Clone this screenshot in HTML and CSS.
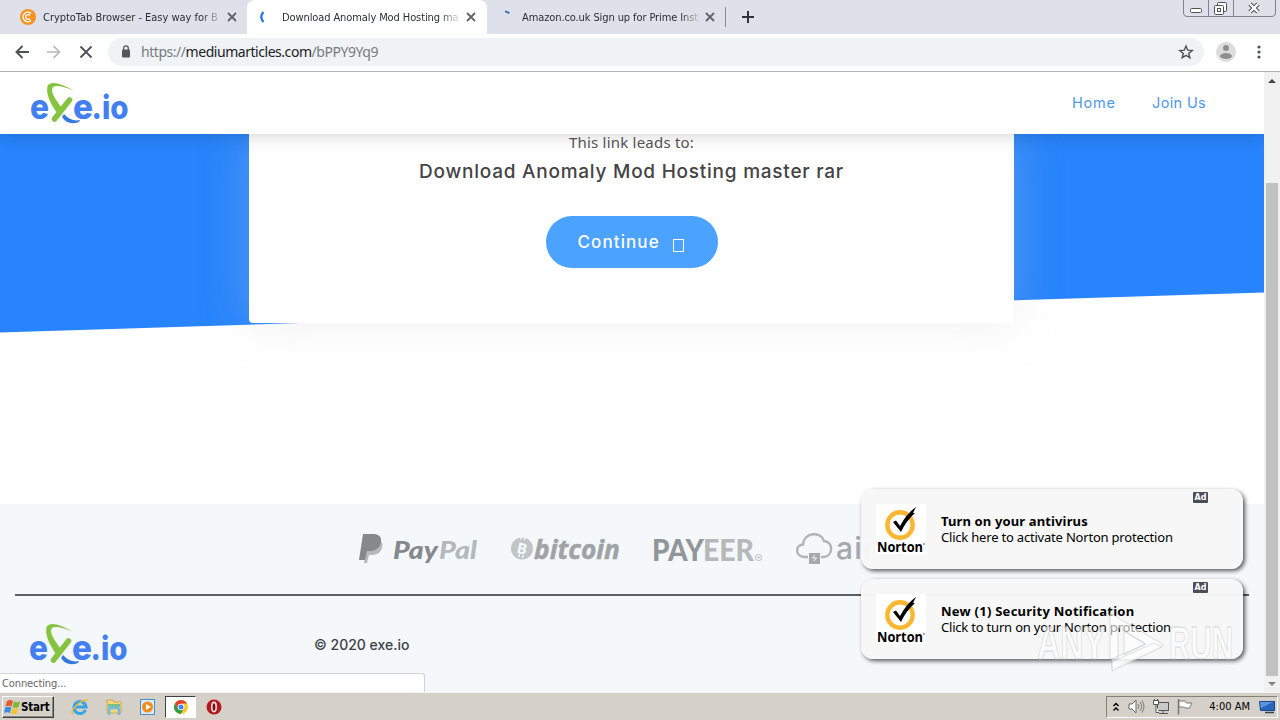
FILE: index.html
```
<!DOCTYPE html>
<html lang="en">
  <head>
    <meta charset="utf-8">
    <title>Download Anomaly Mod Hosting master rar</title>
    <link rel="stylesheet" href="styles.css">
  </head>
  <body>
    <!-- shared shapes -->
    <svg class="defs" width="0" height="0">
      <symbol id="exe-logo" viewBox="0 0 98 42">
        <g fill="#437ff0" font-family="Inter" font-weight="800" font-size="35">
          <text x="0" y="36.500" textLength="19" lengthAdjust="spacingAndGlyphs">e</text>
          <text x="43" y="36.500" textLength="20" lengthAdjust="spacingAndGlyphs">e</text>
          <text x="61.500" y="36.500" font-size="33" textLength="37" lengthAdjust="spacingAndGlyphs">.io</text>
        </g>
        <path d="M34 32 Q41 40 50 38 L49 40 Q38 44 32 35z" fill="#3478e0"/>
        <path d="M44 9 Q24 -3 18 3 C15 10 20 21 27 31 L32 26 C25 17 20 9 23 5 Q28 2 44 9z" fill="#86c440"/>
        <path d="M39.500 18 L24.500 37" stroke="#86c440" stroke-width="5.500" stroke-linecap="round"/>
      </symbol>
      <symbol id="norton" viewBox="0 0 50 50">
        <rect width="50" height="50" fill="#fff"/>
        <circle cx="24" cy="21" r="12.700" fill="none" stroke="#fdb62f" stroke-width="4.400"/>
        <path d="M17 18 L20 16.500 L24 22 Q31 9 40 3 L37 9 L39 9 Q30 17 25 28z" fill="#000"/>
        <text x="1" y="48" font-family="Open Sans" font-weight="700" font-size="15" textLength="46" lengthAdjust="spacingAndGlyphs">Norton</text>
        <path d="M47 40h2" stroke="#555"/>
      </symbol>
    </svg>

    <div class="tabs">
      <div class="tab first">
        <svg width="16" height="16" viewBox="0 0 16 16"><circle cx="8" cy="8" r="8" fill="#f7931e"/><path d="M11 4.500A4.700 4.700 0 1 0 11 11.500" fill="none" stroke="#fff" stroke-width="1.500"/><path d="M10 6.500A2.400 2.400 0 1 0 10 9.500" fill="none" stroke="#fff" stroke-width="1.300"/></svg>
        <span class="tab-title">CryptoTab Browser - Easy way for B</span>
        <svg class="close" width="10" height="10" viewBox="0 0 10 10"><path d="M1 1l8 8M9 1l-8 8"/></svg>
      </div>
      <div class="tab active">
        <svg width="16" height="16" viewBox="0 0 16 16"><path d="M5.500 3Q1 8 5.500 13" fill="none" stroke="#2b78e4" stroke-width="2.300"/></svg>
        <span class="tab-title">Download Anomaly Mod Hosting mas</span>
        <svg class="close" width="10" height="10" viewBox="0 0 10 10"><path d="M1 1l8 8M9 1l-8 8"/></svg>
      </div>
      <div class="tab last">
        <svg width="16" height="16" viewBox="0 0 16 16"><path d="M7 2.500q3 0 4 2" fill="none" stroke="#3c6eb8" stroke-width="2"/></svg>
        <span class="tab-title">Amazon.co.uk Sign up for Prime Inst</span>
        <svg class="close" width="10" height="10" viewBox="0 0 10 10"><path d="M1 1l8 8M9 1l-8 8"/></svg>
      </div>
      <svg class="new-tab" width="12" height="12" viewBox="0 0 12 12"><path d="M6 0v12M0 6h12" stroke="#30343a" stroke-width="2"/></svg>
      <svg class="window-buttons" width="94" height="18" viewBox="0 0 94 18">
        <path d="M.5 0V13Q.5 16.500 4 16.500H89Q92.500 16.500 92.500 13V0M25.500 0V16M50.500 0V16" fill="none" stroke="#7e838e"/>
        <g fill="#fff" stroke="#4b505b"><rect x="7.500" y="8.500" width="11" height="4" rx="1"/><rect x="34.500" y="2.500" width="9" height="9" rx="1"/><rect x="31.500" y="5.500" width="9" height="9" rx="1"/><rect x="34.500" y="8.500" width="3" height="3"/></g>
        <path d="M67 4l8 8M75 4l-8 8" stroke="#4b505b" stroke-width="4.400"/><path d="M67 4l8 8M75 4l-8 8" stroke="#fff" stroke-width="2.400"/>
      </svg>
    </div>

    <div class="toolbar">
      <svg width="14" height="14" viewBox="0 0 14 14"><path d="M14 7H1.500M7.500 1L1.500 7l6 6" fill="none" stroke="#4d5156" stroke-width="1.900"/></svg>
      <svg width="14" height="14" viewBox="0 0 14 14"><path d="M0 7h12.500M6.500 1l6 6-6 6" fill="none" stroke="#b5b7ba" stroke-width="1.700"/></svg>
      <svg width="14" height="14" viewBox="0 0 14 14"><path d="M1.500 1.500l11 11M12.500 1.500l-11 11" stroke="#4d5156" stroke-width="1.800"/></svg>
      <div class="address">
        <svg width="10" height="13" viewBox="0 0 10 13"><rect x="1" y="4.500" width="8" height="8" rx="1" fill="#54585d"/><path d="M2.700 5V3.200a2.300 2.300 0 0 1 4.600 0V5" fill="none" stroke="#54585d" stroke-width="1.300"/></svg>
        <span class="url">https://<b>mediumarticles.com</b>/bPPY9Yq9</span>
        <svg class="star" width="16" height="16" viewBox="0 0 16 16"><path d="M8 2l1.700 4.200 4.500.3-3.500 2.900 1.200 4.400L8 11.400l-3.900 2.400 1.200-4.400-3.500-2.900 4.500-.3z" fill="none" stroke="#4d5156" stroke-width="1.400"/></svg>
      </div>
      <svg class="avatar" width="20" height="20" viewBox="0 0 20 20"><circle cx="10" cy="10" r="10" fill="#dcdcdc"/><circle cx="10" cy="6" r="3" fill="#8f8f8f"/><ellipse cx="10" cy="14" rx="6" ry="3" fill="#8f8f8f"/></svg>
      <svg class="dots" width="4" height="14" viewBox="0 0 4 14"><g fill="#4d5156"><circle cx="2" cy="2" r="1.600"/><circle cx="2" cy="7" r="1.600"/><circle cx="2" cy="12" r="1.600"/></g></svg>
    </div>

    <div class="viewport">
      <div class="page">
        <header class="site-header">
          <svg class="logo" width="98" height="42"><use href="#exe-logo"/></svg>
          <nav>
            <a class="home">Home</a>
            <a class="join">Join Us</a>
          </nav>
        </header>

        <section class="hero">
          <div class="card">
            <p class="lead">This link leads to:</p>
            <h1>Download Anomaly Mod Hosting master rar</h1>
            <a class="continue"><span>Continue</span><i></i></a>
          </div>
        </section>

        <footer>
          <div class="payments">
            <svg width="118" height="40" viewBox="0 0 118 40">
              <path d="M8 10h10q7 2 5 9t-10 7h-3l-2 8H5z" fill="#b5b9bc"/>
              <path d="M4 5h12q7 1 6 8t-9 9H8L6 31H0z" fill="#85898c"/>
              <g font-family="Lato" font-weight="900" font-style="italic" font-size="25">
                <text x="34" y="30" fill="#85898c" textLength="45" lengthAdjust="spacingAndGlyphs">Pay</text>
                <text x="80" y="30" fill="#b5b9bc" textLength="38" lengthAdjust="spacingAndGlyphs">Pal</text>
              </g>
            </svg>
            <svg width="108" height="40" viewBox="0 0 108 40">
              <circle cx="11" cy="19.500" r="11" fill="#c2c5c8"/>
              <text x="6" y="25" fill="#f4f8fb" font-family="Open Sans" font-weight="700" font-size="15" transform="rotate(12 11 20)">B</text>
              <path d="M10.500 7.500l-.5 3M14 8l-.5 3M8 28l.5-3M11.500 29l.5-3" stroke="#f4f8fb" stroke-width="1.500"/>
              <text x="23" y="30" fill="#9fa3a6" stroke="#9fa3a6" stroke-width=".5" font-family="Open Sans" font-weight="700" font-style="italic" font-size="27" textLength="86" lengthAdjust="spacingAndGlyphs">bitcoin</text>
            </svg>
            <svg width="109" height="40" viewBox="0 0 109 40">
              <g font-family="Lato" font-weight="900" font-size="30">
                <text x="-1" y="32" fill="#929699" textLength="52" lengthAdjust="spacingAndGlyphs">PAY</text>
                <text x="50" y="32" fill="#b5b9bc" textLength="51" lengthAdjust="spacingAndGlyphs">EER</text>
              </g>
              <circle cx="105.500" cy="28.500" r="3" fill="none" stroke="#b5b9bc"/><path d="M104 28.500h3" stroke="#b5b9bc"/>
            </svg>
            <svg width="110" height="40" viewBox="0 0 110 40">
              <path d="M12 28H8C-1 27-1 16 7 15.500C8 3 25 2 28 12C38 13 37 27 28 28H25" fill="none" stroke="#b0b4b7" stroke-width="2.400"/>
              <rect x="13" y="24" width="11" height="11" fill="#a5a9ac"/><path d="M19 26l-2.500 3h4L18 32" fill="none" stroke="#f4f8fb"/>
              <text x="40" y="30" fill="#a5a9ac" font-family="Inter" font-weight="500" font-size="30" textLength="78">airtm</text>
            </svg>
          </div>
          <div class="bottom">
            <svg class="logo" width="98" height="42"><use href="#exe-logo"/></svg>
            <span class="copy">© 2020 exe.io</span>
          </div>
        </footer>

        <div class="notices">
          <div class="notice">
            <svg width="50" height="50"><use href="#norton"/></svg>
            <div class="notice-text">
              <strong>Turn on your antivirus</strong>
              <span>Click here to activate Norton protection</span>
            </div>
            <em>Ad</em>
          </div>
          <div class="notice">
            <svg width="50" height="50"><use href="#norton"/></svg>
            <div class="notice-text">
              <strong class="wide">New (1) Security Notification</strong>
              <span>Click to turn on your Norton protection</span>
            </div>
            <em>Ad</em>
          </div>
        </div>
        <div class="status">Connecting...</div>
      </div>

      <div class="scrollbar">
        <svg width="16" height="16" viewBox="0 0 16 16"><path d="M4 11l4-4 4 4z" fill="#454545"/></svg>
        <div class="thumb"></div>
        <svg width="16" height="16" viewBox="0 0 16 16"><path d="M4 6l4 4 4-4z" fill="#858585"/></svg>
      </div>
    </div>

    <div class="taskbar">
      <button class="start">
        <svg width="17" height="16" viewBox="0 0 17 16"><path d="M3 2q3-2 6 0L7.500 7.500q-3-1.500-6 0z" fill="#e8592b"/><path d="M10 2.500q3 1.500 6 0L14.500 8q-3 1.500-6 0z" fill="#7cb83a"/><path d="M1.300 8.500q3-1.500 6 0L6 14q-3-1.500-6 0z" fill="#3e8ddd"/><path d="M8.300 9q3 1.500 6 0L13 14.500q-3 1.500-6 0z" fill="#f8c331"/></svg>
        <span>Start</span>
      </button>
      <div class="launch">
        <svg width="18" height="18" viewBox="0 0 18 18"><path d="M14.500 12A6 6 0 1 1 15 9H4" fill="none" stroke="#36a3e2" stroke-width="3"/><path d="M2 16Q-1 13 6 7T17 2" fill="none" stroke="#e9bb3d" stroke-width="1.500"/></svg>
        <svg width="18" height="18" viewBox="0 0 18 18"><path d="M2 2h6l1 2h7v11H2z" fill="#f0d77e" stroke="#cfac4c"/><path d="M3 6h12v3H3z" fill="#76c08c"/><path d="M4 17v-5q0-2 2-2h6q2 0 2 2v5" fill="none" stroke="#73b9e5" stroke-width="2.500"/></svg>
        <svg width="18" height="18" viewBox="0 0 18 18"><rect x="1.500" y="1.500" width="14" height="15" fill="#d9ecfa" stroke="#4e8fc4"/><circle cx="8.500" cy="9" r="5.500" fill="#f28a1c"/><path d="M7 6l5 3-5 3z" fill="#fff"/></svg>
        <span class="running">
          <svg width="14" height="14" viewBox="0 0 14 14"><circle cx="7" cy="7" r="7" fill="#f9c92e"/><path d="M1 3.500A7 7 0 0 1 13 3.500H7L4 8.700z" fill="#e33d2e"/><path d="M1 3.500A7 7 0 0 0 6.500 14L10 8.700 4 8.700z" fill="#2c9c4a"/><circle cx="7" cy="7" r="3.300" fill="#fff"/><circle cx="7" cy="7" r="2.500" fill="#4184f3"/></svg>
        </span>
        <svg width="16" height="16" viewBox="0 0 16 16"><circle cx="8" cy="8" r="7.500" fill="#b3191d"/><ellipse cx="8" cy="8" rx="2.200" ry="4.600" fill="#7b0b0e" stroke="#f6e4e4" stroke-width="1.600"/></svg>
      </div>
      <div class="tray">
        <svg width="8" height="10" viewBox="0 0 8 10"><path d="M1.500 4L4 1.500 6.500 4M1.500 8.500L4 6l2.500 2.500" fill="none" stroke="#000" stroke-width="1.400"/></svg>
        <svg class="sound" width="17" height="15" viewBox="0 0 17 15"><path d="M1 5h3l4-4v13l-4-4H1z" fill="#fff" stroke="#666"/><path d="M10 5q2 2.500 0 5M12 3q3.500 4.500 0 9M14 1.500q4 6 0 12" fill="none" stroke="#777"/></svg>
        <svg width="16" height="16" viewBox="0 0 16 16"><rect x="4.500" y="3.500" width="11" height="8" fill="#c9c9c9" stroke="#555"/><path d="M6 14.500h9M10 12v2" stroke="#555"/><path d="M.5 1.500h5v4h-5zM1.500 0v2M4.500 0v2M3 6v7.500h3" fill="#fff" stroke="#555"/></svg>
        <svg class="flag" width="16" height="16" viewBox="0 0 16 16"><path d="M1.500 0v15.500" stroke="#777" stroke-width="1.500"/><path d="M2 2h6l1.500 2H15l-2.500 5H8L6.500 8H2z" fill="#fff" stroke="#777"/></svg>
        <span class="clock">4:00 AM</span>
        <svg width="16" height="14" viewBox="0 0 16 14"><path d="M.5 1.500h15v9H1.500z" fill="#2865bd" stroke="#18488c"/><path d="M1 2h13L2 8z" fill="#5a97dc"/><path d="M6 12.500h9" stroke="#345" stroke-width="1.500"/></svg>
      </div>
    </div>

    <svg class="watermark" width="200" height="66" viewBox="0 0 200 66">
      <g font-family="Liberation Sans" font-size="46" font-weight="700" fill="#fff" fill-opacity=".6" stroke="#b9bcbf" stroke-opacity=".6" stroke-width=".8">
        <text x="1" y="48" textLength="68" lengthAdjust="spacingAndGlyphs">ANY</text>
        <text x="133" y="48" textLength="64" lengthAdjust="spacingAndGlyphs">RUN</text>
        <path fill-rule="evenodd" d="M74 2l54 32-52 24V48l33-15-27-17v32h-8zM88 20v24l22-11z"/>
        <path d="M76 51l42-19 8 4-50 24z"/>
      </g>
    </svg>
  </body>
</html>
```

FILE: styles.css
```
* {
  box-sizing: border-box;
}
body {
  margin: 0;
  width: 1280px;
  height: 720px;
  overflow: hidden;
  display: flex;
  flex-direction: column;
  position: relative;
  font-family: "DejaVu Sans Condensed", "DejaVu Sans", sans-serif;
  background: #fff;
}
svg {
  display: block;
  flex: none;
}
.defs {
  position: absolute;
}

/* browser */
.tabs {
  height: 34px;
  flex: none;
  display: flex;
  align-items: center;
  background: #dee1e9;
}
.tab {
  height: 34px;
  display: flex;
  align-items: center;
  font-size: 11px;
  color: #2c2e33;
}
.tab.first {
  width: 247px;
  padding-left: 20px;
}
.tab.active {
  width: 240px;
  padding-left: 11px;
  background: #fff;
  border-radius: 8px 8px 0 0;
}
.tab.last {
  width: 239px;
  height: 20px;
  padding-left: 11px;
  border-right: 1px solid #858992;
}
.tab-title {
  width: 176px;
  margin: 0 7px 0 8px;
  overflow: hidden;
  white-space: nowrap;
  letter-spacing: -0.1px;
  -webkit-mask-image: linear-gradient(to right, #000 158px, transparent 180px);
}
.first .tab-title {
  margin-left: 7px;
  margin-right: 8px;
  letter-spacing: -0.03px;
}
.active .tab-title {
  margin-right: 8px;
}
.close {
  fill: none;
  stroke: #5f6368;
  stroke-width: 1.8;
}
.new-tab {
  margin-left: 16px;
}
.window-buttons {
  margin-left: auto;
  margin-right: 3px;
  align-self: flex-start;
}
.toolbar {
  height: 38px;
  flex: none;
  display: flex;
  align-items: center;
  gap: 18px;
  padding: 0 19px 2px 15px;
  border-bottom: 1px solid #b0b3b0;
}
.address {
  flex: 1;
  height: 28px;
  margin-left: -3px;
  margin-right: -6px;
  padding: 0 10px 0 13px;
  border-radius: 14px;
  background: #f0f3f5;
  display: flex;
  align-items: center;
}
.url {
  margin-left: 10px;
  font: 14px "Noto Sans", sans-serif;
  letter-spacing: -0.46px;
  color: #777b80;
}
.url b {
  font-weight: 400;
  color: #202124;
}
.star {
  margin-left: auto;
}
.avatar {
  margin-right: 3px;
}
.viewport {
  height: 620px;
  flex: none;
  display: flex;
}
.page {
  width: 1264px;
  position: relative;
  overflow: hidden;
}
.scrollbar {
  width: 16px;
  display: flex;
  flex-direction: column;
  background: #f1f1f1;
}
.thumb {
  flex: 1;
  margin: 95px 2px 0;
  background: #c1c1c1;
}

/* site */
.site-header {
  position: relative;
  z-index: 2;
  height: 62px;
  display: flex;
  justify-content: space-between;
  padding: 10px 59px 0 30px;
  background: #fff;
  box-shadow: 0 2px 16px rgba(0, 0, 0, 0.16);
}
nav {
  display: flex;
  gap: 36px;
  padding-top: 12px;
  font: 400 14.5px/18px Inter, sans-serif;
  color: #5097ee;
}
.home {
  width: 44px;
  letter-spacing: 0.8px;
}
.join {
  width: 53px;
  letter-spacing: 0.35px;
  white-space: nowrap;
}
.hero {
  position: relative;
  height: 370px;
}
.hero::before {
  content: "";
  position: absolute;
  inset: 0;
  background: #2784fc;
  clip-path: polygon(0 0, 100% 0, 100% 158.5px, 0 198.5px);
}
.card {
  position: relative;
  width: 765px;
  height: 189px;
  margin-left: 249px;
  border-radius: 0 0 4px 4px;
  display: flex;
  flex-direction: column;
  align-items: center;
  background: #fff;
  box-shadow: 0 0 50px rgba(205, 205, 205, 0.3);
}
.lead {
  margin: -1px 0 0;
  font: 15px/18px "Noto Sans", sans-serif;
  letter-spacing: 0.22px;
  color: #555;
}
h1 {
  margin: 9px 0 0;
  font: 500 19px/24px Inter, sans-serif;
  letter-spacing: 0.76px;
  color: #444;
  white-space: nowrap;
}
.continue {
  width: 172px;
  height: 52px;
  margin-top: 32px;
  padding-left: 32px;
  border-radius: 26px;
  display: flex;
  align-items: center;
  background: #4ba2ff;
  color: #fff;
  font: 500 17px Inter, sans-serif;
}
.continue span {
  width: 95px;
  letter-spacing: 1.1px;
}
.continue i {
  width: 11px;
  height: 13px;
  margin-top: 6px;
  border: 1px solid #fff;
}
footer {
  height: 188px;
  background: #f4f8fb;
}
.payments {
  height: 92px;
  margin: 0 15px;
  padding: 25px 0 0 344px;
  display: flex;
  gap: 34px;
  border-bottom: 2px solid #5c6065;
}
.bottom {
  display: flex;
  padding: 27px 0 0 29px;
}
.copy {
  margin: 13px 0 0 187px;
  font: 500 14px/18px Inter, sans-serif;
  color: #3c4045;
}

/* overlays */
.notices {
  position: absolute;
  z-index: 3;
  left: 861px;
  top: 417px;
  display: flex;
  flex-direction: column;
  gap: 10px;
}
.notice {
  position: relative;
  width: 382px;
  height: 80px;
  padding-left: 15px;
  border-radius: 12px;
  display: flex;
  align-items: center;
  background: rgba(247, 247, 247, 0.97);
  box-shadow: 2px 2px 4px rgba(0, 0, 0, 0.65);
}
.notice-text {
  margin-left: 15px;
  display: flex;
  flex-direction: column;
  font: 13px/16px "Noto Sans", sans-serif;
  letter-spacing: -0.2px;
  color: #000;
}
.notice-text strong {
  letter-spacing: 0.13px;
}
.notice-text .wide {
  letter-spacing: 0.25px;
}
.notice em {
  position: absolute;
  right: 35px;
  top: 3px;
  width: 15px;
  height: 11px;
  border-radius: 1px;
  background: #4a4e5b;
  color: #fff;
  font: 700 8px/11px "DejaVu Sans", sans-serif;
  text-align: center;
}
.status {
  position: absolute;
  left: 0;
  bottom: 0;
  width: 425px;
  height: 19px;
  padding-left: 2px;
  border: 1px solid #cfd4d8;
  border-width: 1px 1px 0 0;
  border-radius: 0 3px 0 0;
  background: #fff;
  color: #666;
  font-size: 11px;
  line-height: 19px;
  letter-spacing: -0.1px;
}

/* taskbar */
.taskbar {
  flex: 1;
  display: flex;
  align-items: center;
  padding: 0 0 0 2px;
  background: #d5d0c8;
  border-top: 1px solid #f4f2ee;
}
.start {
  width: 52px;
  height: 22px;
  padding: 0 0 0 1px;
  display: flex;
  align-items: center;
  border: 1px solid;
  border-color: #fff #404040 #404040 #fff;
  box-shadow: inset -1px -1px #888;
  background: #d5d0c8;
  color: #000;
  font: bold 11.5px "DejaVu Sans Condensed", sans-serif;
  letter-spacing: -0.2px;
}
.launch {
  display: flex;
  align-items: center;
  gap: 16px;
  margin-left: 17px;
}
.running {
  width: 31px;
  height: 22px;
  margin: 0 -6px 0 -8px;
  display: grid;
  place-items: center;
  background: #fff;
  border: 1px solid;
  border-color: #404040 #fff #fff #404040;
}
.tray {
  margin-left: auto;
  margin-right: 2px;
  width: 172px;
  height: 22px;
  padding: 0 2px 0 5px;
  display: flex;
  align-items: center;
  gap: 8px;
  border: 1px solid;
  border-color: #858078 #fff #fff #858078;
}
.clock {
  margin-left: auto;
  margin-right: 1px;
  font-size: 11px;
  white-space: nowrap;
}
.watermark {
  position: absolute;
  z-index: 5;
  left: 1036px;
  top: 611px;
}
```
